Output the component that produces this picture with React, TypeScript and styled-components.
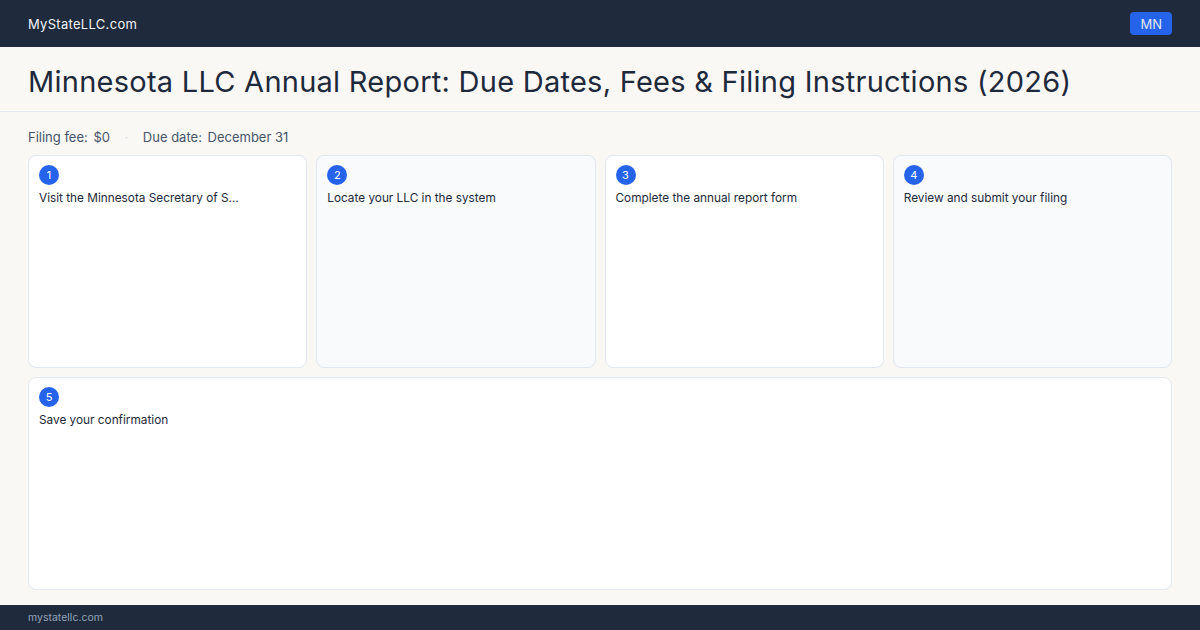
import styled, { createGlobalStyle } from "styled-components";

const GlobalStyle = createGlobalStyle`
  html, body {
    margin: 0;
    padding: 0;
    background: #f9f8f5;
    font-family: Inter, "Noto Sans", sans-serif;
    color: #1e293b;
  }
  * {
    box-sizing: border-box;
  }
`;

interface Step {
  n: number;
  text: string;
}

const steps: Step[] = [
  { n: 1, text: "Visit the Minnesota Secretary of S…" },
  { n: 2, text: "Locate your LLC in the system" },
  { n: 3, text: "Complete the annual report form" },
  { n: 4, text: "Review and submit your filing" },
  { n: 5, text: "Save your confirmation" },
];

const App = () => {
  return (
    <Page>
      <GlobalStyle />
      <TopBar>
        <Brand>MyStateLLC.com</Brand>
        <StateBadge>MN</StateBadge>
      </TopBar>
      <TitleBar>
        <Title>
          Minnesota LLC Annual Report: Due Dates, Fees &amp; Filing Instructions
          (2026)
        </Title>
      </TitleBar>
      <Main>
        <Meta>
          <MetaItem>
            Filing fee: <b>$0</b>
          </MetaItem>
          <Dot>·</Dot>
          <MetaItem>
            Due date: <b>December 31</b>
          </MetaItem>
        </Meta>
        <Steps>
          {steps.map((s, i) => (
            <Card key={s.n} $tinted={i % 2 === 1} $wide={i === 4}>
              <Num>{s.n}</Num>
              <StepText>{s.text}</StepText>
            </Card>
          ))}
        </Steps>
      </Main>
      <Footer>mystatellc.com</Footer>
    </Page>
  );
};

export default App;

const Page = styled.div`
  width: 1200px;
  height: 630px;
  display: flex;
  flex-direction: column;
  overflow: hidden;
`;

const TopBar = styled.header`
  height: 47px;
  flex: 0 0 auto;
  background: #1f2a3c;
  display: flex;
  align-items: center;
  justify-content: space-between;
  padding: 0 28px;
`;

const Brand = styled.div`
  color: #f1f5f9;
  font-size: 13px;
  letter-spacing: 0.3px;
`;

const StateBadge = styled.div`
  background: #2563eb;
  color: #e2e8f0;
  font-size: 13px;
  height: 23px;
  padding: 0 10px;
  border-radius: 4px;
  display: flex;
  align-items: center;
  justify-content: center;
`;

const TitleBar = styled.div`
  height: 65px;
  flex: 0 0 auto;
  border-bottom: 1px solid #e2e8f0;
  display: flex;
  align-items: center;
  padding: 5px 28px 0;
`;

const Title = styled.h1`
  margin: 0;
  font-size: 29px;
  font-weight: 400;
  color: #1e293b;
  letter-spacing: 0.26px;
  white-space: nowrap;
`;

const Main = styled.main`
  flex: 1;
  display: flex;
  flex-direction: column;
  padding: 17px 28px 15px 28px;
  gap: 10px;
  min-height: 0;
`;

const Meta = styled.div`
  display: flex;
  align-items: center;
  gap: 15px;
  font-size: 13px;
  color: #475569;
  height: 16px;

  b {
    font-weight: 400;
    margin-left: 2px;
  }
`;

const MetaItem = styled.span``;

const Dot = styled.span`
  color: #cbd5e1;
  font-size: 10px;
`;

const Steps = styled.div`
  flex: 1;
  display: grid;
  grid-template-columns: repeat(4, 1fr);
  grid-template-rows: 1fr 1fr;
  gap: 9px;
  min-height: 0;
`;

const Card = styled.div<{ $tinted: boolean; $wide: boolean }>`
  grid-column: ${(p) => (p.$wide ? "1 / -1" : "auto")};
  background: ${(p) => (p.$tinted ? "#f8fafc" : "#ffffff")};
  border: 1px solid #e2e8f0;
  border-radius: 8px;
  padding: 9px 10px;
  display: flex;
  flex-direction: column;
  align-items: flex-start;
  gap: 5px;
`;

const Num = styled.div`
  width: 20px;
  height: 20px;
  border-radius: 50%;
  background: #2563eb;
  color: #ffffff;
  font-size: 11px;
  display: flex;
  align-items: center;
  justify-content: center;
`;

const StepText = styled.div`
  font-size: 11.8px;
  color: #1e293b;
  line-height: 17px;
`;

const Footer = styled.footer`
  height: 25px;
  flex: 0 0 auto;
  background: #1f2a3c;
  color: #94a3b8;
  font-size: 10.5px;
  display: flex;
  align-items: center;
  padding: 0 28px;
`;
